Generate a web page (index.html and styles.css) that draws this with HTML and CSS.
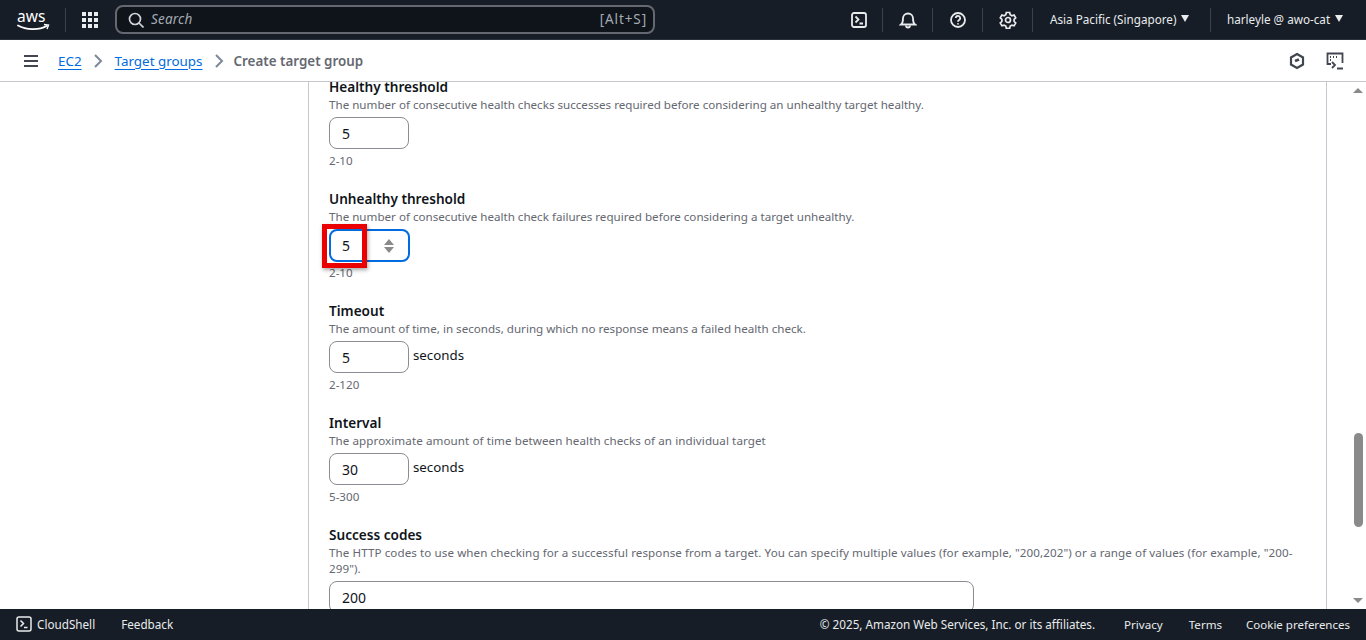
FILE: index.html
```html
<!DOCTYPE html>
<html lang="en">
<head>
<meta charset="utf-8">
<title>Create target group</title>
<link rel="stylesheet" href="styles.css">
</head>
<body>
<div class="app">
  <header class="topbar">
    <svg class="logo" width="33" height="30" viewBox="0 0 33 30"><text x="0" y="17" class="logo-text">aws</text><path d="M1 20.500c8 4.500 21 5 28.500 .5" fill="none" stroke="#fff" stroke-width="1.800" stroke-linecap="round"/><path d="M27 19.500l4.500 .5-1.500 4" fill="none" stroke="#fff" stroke-width="1.400"/></svg>
    <span class="vr vr-logo"></span>
    <svg class="grid-icon" width="18" height="18" viewBox="0 0 18 18" fill="#e9ebed"><rect x="1" y="1" width="4" height="4"/><rect x="7" y="1" width="4" height="4"/><rect x="13" y="1" width="4" height="4"/><rect x="1" y="7" width="4" height="4"/><rect x="7" y="7" width="4" height="4"/><rect x="13" y="7" width="4" height="4"/><rect x="1" y="13" width="4" height="4"/><rect x="7" y="13" width="4" height="4"/><rect x="13" y="13" width="4" height="4"/></svg>
    <div class="search">
      <svg width="16" height="16" viewBox="0 0 16 16" fill="none" stroke="#d1d5db" stroke-width="1.700"><circle cx="7" cy="7" r="5.500"/><path d="M11 11l4.500 4.500"/></svg>
      <span class="search-text">Search</span>
      <span class="search-key">[Alt+S]</span>
    </div>
    <div class="top-actions">
      <span class="tbtn tbtn-first"><svg width="18" height="18" viewBox="0 0 18 18" fill="none" stroke="#e9ebed" stroke-width="1.800"><rect x="2" y="2" width="14" height="14" rx="2"/><path d="M5.500 5.500l3 3-3 3M9.500 12.500h3.500"/></svg></span>
      <span class="vr"></span>
      <span class="tbtn"><svg width="18" height="18" viewBox="0 0 18 18" fill="none" stroke="#e9ebed" stroke-width="1.800"><path d="M2 13.500c2-1.500 2-3 2-6a5 5 0 0 1 10 0c0 3 0 4.500 2 6z"/><path d="M7 14.500a2 2 0 0 0 4 0"/></svg></span>
      <span class="vr"></span>
      <span class="tbtn"><svg width="18" height="18" viewBox="0 0 18 18" fill="none" stroke="#e9ebed" stroke-width="1.800"><circle cx="9" cy="9" r="7"/><path d="M6.800 7a2.200 2.200 0 1 1 3.300 2c-.8.500-1.100 1-1.100 1.800"/><path d="M9 12.200v1.300"/></svg></span>
      <span class="vr"></span>
      <span class="tbtn"><svg width="18" height="18" viewBox="0 0 18 18" fill="none" stroke="#e9ebed" stroke-width="1.700"><path d="M7.300 1.500h3.400l.5 2.200 1.700 1 2.200-.7 1.600 2.900-1.600 1.500v2l1.600 1.500-1.600 2.900-2.200-.7-1.700 1-.5 2.200H7.300l-.5-2.200-1.700-1-2.200.7-1.600-2.900 1.600-1.500v-2L1.300 6.900l1.600-2.900 2.200.7 1.700-1z"/><circle cx="9" cy="9" r="2.500"/></svg></span>
      <span class="vr"></span>
      <span class="menu menu-region">Asia Pacific (Singapore) <i class="caret"></i></span>
      <span class="vr"></span>
      <span class="menu menu-user">harleyle @ awo-cat <i class="caret"></i></span>
    </div>
  </header>

  <nav class="crumbs">
    <svg class="burger" width="16" height="14" viewBox="0 0 16 14" fill="none" stroke="#424650" stroke-width="2"><path d="M1 2h14M1 7h14M1 12h14"/></svg>
    <a class="crumb-link crumb-ec2" href="#">EC2</a>
    <svg class="chev chev-a" width="10" height="14" viewBox="0 0 10 14" fill="none" stroke="#7d8998" stroke-width="2"><path d="M2 1l6 6-6 6"/></svg>
    <a class="crumb-link" href="#">Target groups</a>
    <svg class="chev chev-b" width="10" height="14" viewBox="0 0 10 14" fill="none" stroke="#7d8998" stroke-width="2"><path d="M2 1l6 6-6 6"/></svg>
    <span class="crumb-current">Create target group</span>
    <span class="crumb-icons">
      <svg width="18" height="18" viewBox="0 0 18 18" fill="none" stroke="#424650" stroke-width="2.200"><path d="M9 2l6 3.500v7L9 16l-6-3.500v-7z"/><path d="M7 9l4-1.500" stroke-width="2.800"/></svg>
      <svg width="18" height="18" viewBox="0 0 18 18" fill="none" stroke="#424650" stroke-width="1.800"><path d="M5 12H1.500V1.500h15V11"/><path d="M4 5h1M7 5h1M10 5h1M4 8h1" stroke-width="2"/><path d="M6 10l3 3-3 3M11 16.500h6"/></svg>
    </span>
  </nav>

  <div class="body">
    <aside class="side"></aside>
    <main class="panel">
      <section class="field field-first">
        <div class="label">Healthy threshold</div>
        <div class="desc">The number of consecutive health checks successes required before considering an unhealthy target healthy.</div>
        <div class="control"><span class="num">5</span></div>
        <div class="hint">2-10</div>
      </section>
      <section class="field">
        <div class="label">Unhealthy threshold</div>
        <div class="desc">The number of consecutive health check failures required before considering a target unhealthy.</div>
        <div class="control">
          <span class="num num-focus">5
            <svg class="spin" width="12" height="16" viewBox="0 0 12 16" fill="#8a8a8a"><path d="M6 1l5 6H1zM1 9h10l-5 6z"/></svg>
          </span>
          <span class="redbox"></span>
        </div>
        <div class="hint">2-10</div>
      </section>
      <section class="field">
        <div class="label">Timeout</div>
        <div class="desc">The amount of time, in seconds, during which no response means a failed health check.</div>
        <div class="control"><span class="num">5</span><span class="unit">seconds</span></div>
        <div class="hint">2-120</div>
      </section>
      <section class="field">
        <div class="label">Interval</div>
        <div class="desc desc-wide">The approximate amount of time between health checks of an individual target</div>
        <div class="control"><span class="num">30</span><span class="unit">seconds</span></div>
        <div class="hint">5-300</div>
      </section>
      <section class="field">
        <div class="label">Success codes</div>
        <div class="desc desc-wide">The HTTP codes to use when checking for a successful response from a target. You can specify multiple values (for example, "200,202") or a range of values (for example, "200-299").</div>
        <div class="control"><span class="num num-wide">200</span></div>
      </section>
    </main>
    <div class="gutter"></div>
    <div class="scrollbar">
      <i class="arrow-up"></i>
      <i class="thumb"></i>
      <i class="arrow-down"></i>
    </div>
  </div>

  <footer class="footer">
    <svg width="16" height="16" viewBox="0 0 16 16" fill="none" stroke="#e9ebed" stroke-width="1.500"><rect x="1" y="1" width="14" height="14" rx="2"/><path d="M4.500 4.500l3 3-3 3M8 11.500h3.500"/></svg>
    <span class="foot-cloud">CloudShell</span>
    <span class="foot-feedback">Feedback</span>
    <span class="foot-copy">© 2025, Amazon Web Services, Inc. or its affiliates.</span>
    <span class="foot-link foot-privacy">Privacy</span>
    <span class="foot-link foot-terms">Terms</span>
    <span class="foot-link foot-cookie">Cookie preferences</span>
  </footer>
</div>
</body>
</html>
```

FILE: styles.css
```css
* { box-sizing: border-box; }
html, body { margin: 0; height: 100%; overflow: hidden; }
body { font-family: "Noto Sans", "Open Sans", sans-serif; font-size: 11.7px; color: #0f141a; background: #fff; }
.app { display: flex; flex-direction: column; height: 640px; }

.topbar { flex: 0 0 40px; display: flex; align-items: center; background: #161d26; color: #e9ebed; padding-left: 17px; border-bottom: 1px solid #2a323c; }
.logo { flex: none; }
.logo-text { font: 15.500px "Noto Sans", sans-serif; fill: #fff; }
.vr { flex: none; width: 1px; height: 24px; background: #3a424d; }
.vr-logo { margin-left: 15px; }
.grid-icon { flex: none; margin-left: 15px; }
.search { flex: none; width: 540px; height: 29px; margin-left: 16px; display: flex; align-items: center; padding: 0 6px 0 11px; background: #0f141a; border: 2px solid #656871; border-radius: 8px; }
.search-text { margin: -2px 0 0 7px; font-size: 13.500px; letter-spacing: .2px; font-style: italic; color: #a4abb3; }
.search-key { margin: -2px 0 0 auto; font-size: 13.500px; letter-spacing: .9px; color: #a4abb3; }
.top-actions { flex: 1; display: flex; align-items: center; padding-left: 180px; }
.tbtn { flex: none; width: 49px; display: flex; justify-content: center; }
.tbtn-first { width: 47px; }
.menu { flex: none; display: flex; align-items: center; margin-top: -2px; white-space: nowrap; color: #e9ebed; }
.menu-region { width: 177px; padding-left: 17px; }
.menu-user { padding-left: 16px; }
.caret { width: 0; height: 0; margin-left: 5px; border-left: 4.500px solid transparent; border-right: 4.500px solid transparent; border-top: 7px solid #e9ebed; }

.crumbs { flex: 0 0 42px; display: flex; align-items: center; padding-left: 23px; background: #fff; border-bottom: 1px solid #c6c6cd; font-size: 13.400px; }
.burger { flex: none; }
.crumb-link { color: #006ce0; text-decoration: underline; text-underline-offset: 3px; white-space: nowrap; }
.crumb-ec2 { margin-left: 19px; }
.chev { flex: none; }
.chev-a { margin: 0 12px 0 11px; }
.chev-b { margin: 0 10px 0 11px; }
.crumb-current { color: #656871; font-weight: 600; }
.crumb-icons { margin-left: auto; display: flex; gap: 20px; padding-right: 22px; }

.body { flex: 1; min-height: 0; display: flex; overflow: hidden; background: #fff; }
.side { flex: 0 0 308px; background: #fff; }
.panel { flex: 0 0 1019px; border-left: 1px solid #c6c6cd; border-right: 1px solid #c6c6cd; padding: 0 32px 0 20px; }
.gutter { flex: 0 0 22px; }
.scrollbar { flex: 0 0 17px; position: relative; background: #fff; }

.field { height: 112px; }
.label { font-size: 13.600px; font-weight: 600; line-height: 18px; color: #0f141a; }
.field-first { height: 108px; }
.field-first .label { line-height: 10px; margin-bottom: 4px; }
.desc { font-size: 11.620px; line-height: 16px; padding-top: 1px; color: #656871; }
.desc-wide { letter-spacing: .08px; }
.control { position: relative; display: flex; align-items: flex-start; height: 32px; margin-top: 4px; }
.num { width: 80px; height: 32px; display: flex; align-items: center; padding-left: 12px; background: #fff; border: 1px solid #8c8c94; border-radius: 8px; font-size: 14px; color: #0f141a; }
.num-focus { width: 81px; height: 33px; border: 2px solid #006ce0; padding-left: 11px; }
.num-wide { width: 645px; }
.spin { margin-left: 33px; }
.unit { margin-left: 4px; font-size: 13.300px; line-height: 28px; color: #0f141a; }
.hint { font-size: 11.600px; line-height: 16px; margin-top: 4px; color: #656871; }
.redbox { position: absolute; left: -7px; top: -5px; width: 45px; height: 44px; border: 5px solid #ea0000; box-shadow: 1px 2px 4px rgba(0,0,0,.35); }

.arrow-up, .arrow-down { position: absolute; left: 4px; width: 0; height: 0; border-left: 5px solid transparent; border-right: 5px solid transparent; }
.arrow-up { top: 6px; border-bottom: 5px solid #8a8a8a; }
.arrow-down { bottom: 6px; border-top: 5px solid #8a8a8a; }
.thumb { position: absolute; left: 5px; top: 351px; width: 9px; height: 94px; border-radius: 5px; background: #8a8a8a; }

.footer { flex: 0 0 31px; display: flex; align-items: center; padding: 0 0 1px 16px; background: #161d26; color: #e9ebed; white-space: nowrap; }
.foot-cloud { margin-left: 5px; }
.foot-feedback { margin-left: 26px; }
.foot-copy { margin-left: auto; }
.foot-link { flex: none; font-size: 11.600px; }
.foot-privacy { margin-left: 29px; }
.foot-terms { margin-left: 26px; }
.foot-cookie { margin-left: 24px; margin-right: 16px; font-size: 11.500px; }
```
